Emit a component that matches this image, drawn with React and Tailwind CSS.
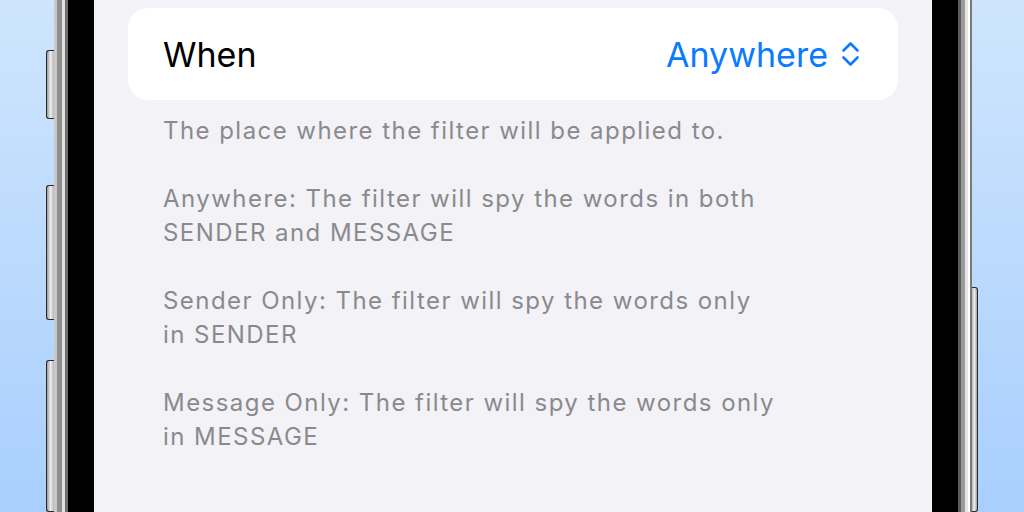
import React from "react";

const paragraphs = [
  ["The place where the filter will be applied to."],
  ["Anywhere: The filter will spy the words in both", "SENDER and MESSAGE"],
  ["Sender Only: The filter will spy the words only", "in SENDER"],
  ["Message Only: The filter will spy the words only", "in MESSAGE"],
];

function SideButton({ className }) {
  return (
    <div
      className={`w-[8px] rounded-l-[3px] border border-r-0 border-[#2a2a2a] bg-linear-to-r from-[#9c9c9c] via-[#ececec] to-[#b8b8b8] ${className}`}
    />
  );
}

function UpDownChevron() {
  return (
    <svg width="19" height="26" viewBox="0 0 19 26" fill="none">
      <path
        d="M2.5 9.5 L9.5 2.5 L16.5 9.5"
        stroke="#0a7aff"
        strokeWidth="2.6"
        strokeLinecap="round"
        strokeLinejoin="round"
      />
      <path
        d="M2.5 16.5 L9.5 23.5 L16.5 16.5"
        stroke="#0a7aff"
        strokeWidth="2.6"
        strokeLinecap="round"
        strokeLinejoin="round"
      />
    </svg>
  );
}

export default function App() {
  return (
    <div
      className="w-[1024px] h-[512px] overflow-hidden flex bg-linear-to-b from-[#cfe5fd] to-[#a8cffd] pl-[46px]"
      style={{ fontFamily: "Inter, 'Noto Sans', sans-serif" }}
    >
      {/* left side buttons */}
      <div className="flex flex-col w-[8px] shrink-0 pt-[50px]">
        <SideButton className="h-[72px]" />
        <SideButton className="h-[142px] mt-[66px]" />
        <SideButton className="h-[160px] mt-[40px]" />
      </div>

      {/* left frame */}
      <div className="w-[14px] shrink-0 flex">
        <div className="w-[3px] bg-[#c9c9c9]" />
        <div className="w-[5px] bg-[#8e8e8e]" />
        <div className="w-[3px] bg-[#e2e2e2]" />
        <div className="w-[3px] bg-[#6f6f6f]" />
      </div>
      <div className="w-[26px] shrink-0 bg-black" />

      {/* screen */}
      <div className="w-[838px] shrink-0 bg-[#f2f2f7] px-[34px] pt-[8px]">
        <div className="h-[92px] bg-white rounded-[20px] flex items-center justify-between pl-[35px] pr-[38px]">
          <span className="text-[34px] text-black">When</span>
          <div className="flex items-center gap-[13px]">
            <span className="text-[34px] text-[#0a7aff]">Anywhere</span>
            <UpDownChevron />
          </div>
        </div>

        <div className="mt-[14px] pl-[35px] text-[24px] leading-[34px] tracking-[1.45px] text-[#8a8a8e] flex flex-col gap-[34px]">
          {paragraphs.map((lines, i) => (
            <p key={i} className="whitespace-nowrap">
              {lines.map((line, j) => (
                <span key={j} className="block">
                  {line}
                </span>
              ))}
            </p>
          ))}
        </div>
      </div>

      {/* right frame */}
      <div className="w-[26px] shrink-0 bg-black" />
      <div className="w-[14px] shrink-0 flex">
        <div className="w-[3px] bg-[#5a5a5a]" />
        <div className="w-[4px] bg-[#9a9a9a]" />
        <div className="w-[3px] bg-[#e6e6e6]" />
        <div className="w-[2px] bg-[#ffffff]" />
        <div className="w-[2px] bg-[#7a7a7a]" />
      </div>

      {/* right side button */}
      <div className="flex flex-col w-[6px] shrink-0 pt-[287px]">
        <div className="h-[240px] w-[6px] rounded-r-[3px] border border-l-0 border-[#2a2a2a] bg-linear-to-r from-[#b8b8b8] via-[#ececec] to-[#9c9c9c]" />
      </div>
    </div>
  );
}
